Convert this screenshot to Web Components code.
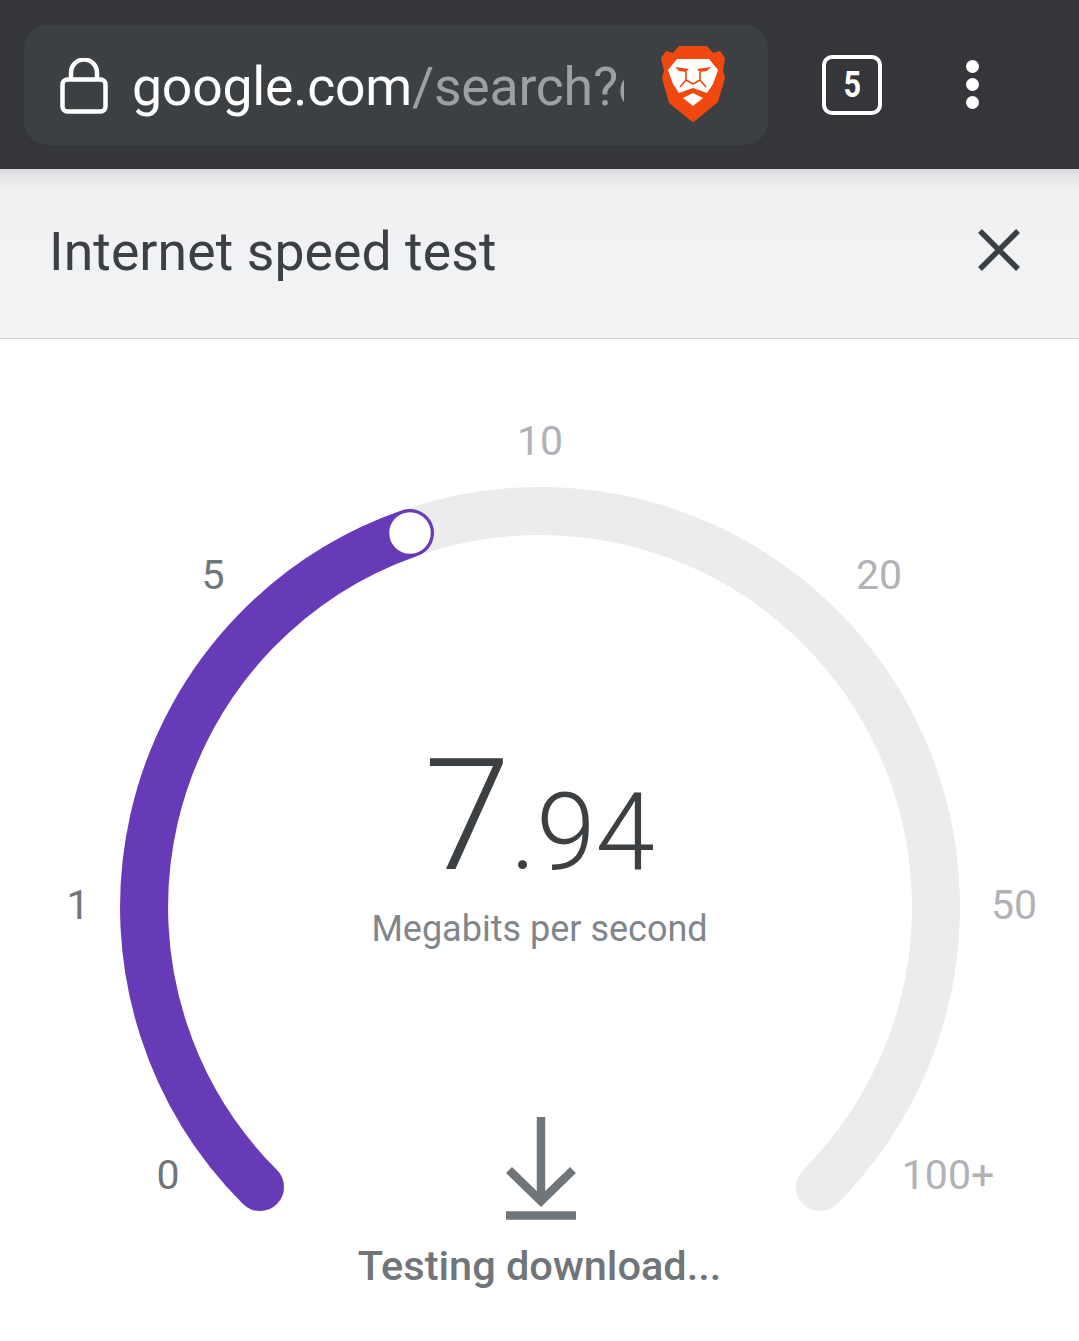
<!DOCTYPE html>
<html lang="en">
<head>
  <meta charset="UTF-8">
  <title>Internet speed test</title>
  <style>
    html, body { margin: 0; padding: 0; background: #fff; }
    body { font-family: Roboto, "Liberation Sans", sans-serif; width: 1079px; height: 1341px; overflow: hidden; }
  </style>
</head>
<body>
  <browser-toolbar tabs="5">
    <span slot="host">google.com</span><span slot="path">/search?q</span>
  </browser-toolbar>
  <panel-header>Internet speed test</panel-header>
  <speed-gauge whole="7" fraction=".94" unit="Megabits per second" status="Testing download..."></speed-gauge>

  <template id="toolbar-template">
    <style>
      :host { display: flex; align-items: center; height: 169px; background: #35363a; box-sizing: border-box; padding: 0 0 0 24px; }
      .omnibox { width: 744px; height: 120px; border-radius: 24px; background: #3c4043; display: flex; align-items: center; box-sizing: border-box; padding-left: 36px; }
      .lock { width: 48px; height: 56px; flex: none; margin-top: 2px; }
      .url { width: 492px; margin-left: 24px; margin-top: 4px; overflow: hidden; white-space: nowrap; font-size: 53.5px; line-height: 64px; color: #fff; letter-spacing: -0.2px; }
      .path { color: #9aa0a6; }
      .brave { width: 66px; height: 78px; flex: none; margin-left: 36px; margin-top: -2px; }
      .tabs { width: 60px; height: 60px; box-sizing: border-box; margin-left: 54px; border: 4px solid #fff; border-radius: 10px; color: #fff; display: flex; align-items: center; justify-content: center; font-size: 36px; font-weight: 700; flex: none; }
      .tabs span { display: block; transform: scaleX(.85); }
      .menu { width: 14px; height: 49px; margin-left: 84px; flex: none; display: flex; flex-direction: column; justify-content: space-between; }
      .menu i { display: block; width: 13px; height: 13px; border-radius: 50%; background: #fff; }
    </style>
    <div class="omnibox">
      <svg class="lock" viewBox="0 0 48 56" fill="none" stroke="#fff" stroke-width="4.5">
        <path d="M11 23V14.5a13 13 0 0 1 26 0V23"/>
        <rect x="2.5" y="21.5" width="43" height="32" rx="5"/>
      </svg>
      <div class="url"><slot name="host"></slot><span class="path"><slot name="path"></slot></span></div>
      <svg class="brave" viewBox="0 0 66 78">
        <path fill="#f1480f" d="M19 1H47L53 8L60 6L65 13L63 26L65 33L58 57L36 75L33 77L30 75L9 58L2 33L4 26L1 13L6 6L13 8Z"/>
        <path fill="#fff" d="M17 14H49L58 25L53 39L47 48L33 43L19 48L13 39L8 25Z"/>
        <path fill="#f1480f" d="M15 22L29 24L26 27L19 26Z M51 22L37 24L40 27L47 26Z"/>
        <path fill="none" stroke="#f1480f" stroke-width="1.6" d="M26 27V35L20 42M40 27V35L46 42M26 35L33 39L40 35"/>
        <path fill="#fff" d="M33 48L43 53L33 61L23 53Z"/>
      </svg>
    </div>
    <div class="tabs"><span id="count"></span></div>
    <div class="menu"><i></i><i></i><i></i></div>
  </template>

  <template id="header-template">
    <style>
      :host { display: flex; align-items: center; justify-content: space-between; box-sizing: border-box; height: 170px; padding: 0 59px 0 49px; color: #3c4043; font-size: 53.5px; background: linear-gradient(#dcdcde 0, #e8e8ea 9px, #e9e9eb 13px, #f1f1f3 21px, #f1f3f4 100%); border-bottom: 1px solid #cfd0d3; }
      svg { width: 42px; height: 42px; flex: none; margin-top: -7px; }
      .title { margin-top: -5px; letter-spacing: 0.1px; }
    </style>
    <div class="title"><slot></slot></div>
    <svg viewBox="0 0 42 42" stroke="#3c4043" stroke-width="5.5" fill="none"><path d="M2 2L40 40M40 2L2 40"/></svg>
  </template>

  <template id="gauge-template">
    <style>
      :host { display: block; position: relative; height: 1002px; background: #fff; }
      svg.dial { position: absolute; left: 0; top: 0; width: 1079px; height: 1002px; }
      .tick { position: absolute; transform: translate(-50%, -50%); font-size: 41px; line-height: 46px; color: #b0b2b8; }
      .tick.on { color: #70757a; }
      .readout { position: absolute; left: 0; width: 1079px; top: 402px; display: flex; flex-direction: column; align-items: center; }
      .value { font-weight: 300; color: #3c4043; line-height: 150px; height: 150px; white-space: nowrap; display: flex; align-items: baseline; }
      .whole { font-size: 156px; }
      .fraction { font-size: 107px; }
      .unit { font-size: 36px; line-height: 46px; color: #80868b; margin-top: 15px; }
      .status { position: absolute; left: 0; width: 1079px; top: 778px; display: flex; flex-direction: column; align-items: center; }
      .status svg { width: 70px; height: 104px; margin-left: 3px; }
      .status span { font-size: 41.5px; font-weight: 500; line-height: 50px; color: #70757a; margin-top: 20px; }
    </style>
    <svg class="dial" viewBox="0 0 1079 1002" fill="none">
      <circle cx="540" cy="568" r="396" stroke="#ececee" stroke-width="48" stroke-linecap="round" pathLength="360" stroke-dasharray="270 90" transform="rotate(135 540 568)"/>
      <path d="M260 848A396 396 0 0 1 410 194" stroke="#673ab7" stroke-width="48" stroke-linecap="round"/>
      <circle cx="410" cy="194" r="22" fill="#fff" stroke="#673ab7" stroke-width="2.5"/>
    </svg>
    <div class="ticks" id="ticks"></div>
    <div class="readout">
      <div class="value"><span class="whole" id="whole"></span><span class="fraction" id="fraction"></span></div>
      <div class="unit" id="unit"></div>
    </div>
    <div class="status">
      <svg viewBox="0 0 70 104" fill="none" stroke="#70757a" stroke-width="8.5">
        <path d="M35 0V84"/>
        <path d="M3 53L35 84L67 53"/>
        <path d="M0 98.5H70"/>
      </svg>
      <span id="status"></span>
    </div>
  </template>

  <script>
    class BrowserToolbar extends HTMLElement {
      constructor () {
        super()
        const root = this.attachShadow({mode: 'open'})
        root.appendChild(document.getElementById('toolbar-template').content.cloneNode(true))
        root.getElementById('count').textContent = this.getAttribute('tabs')
      }
    }
    class PanelHeader extends HTMLElement {
      constructor () {
        super()
        this.attachShadow({mode: 'open'}).appendChild(document.getElementById('header-template').content.cloneNode(true))
      }
    }
    // dial labels: [text, x, y, passed]
    const TICKS = [
      ['0', 168, 836, true], ['1', 78, 566, true], ['5', 213, 236, true],
      ['10', 540, 102, false], ['20', 879, 236, false], ['50', 1014, 566, false], ['100+', 948, 836, false]
    ]
    class SpeedGauge extends HTMLElement {
      constructor () {
        super()
        const root = this.attachShadow({mode: 'open'})
        root.appendChild(document.getElementById('gauge-template').content.cloneNode(true))
        for (const name of ['whole', 'fraction', 'unit', 'status']) {
          root.getElementById(name).textContent = this.getAttribute(name)
        }
        const ticks = root.getElementById('ticks')
        TICKS.forEach(([text, x, y, on]) => {
          const el = document.createElement('span')
          el.className = on ? 'tick on' : 'tick'
          el.textContent = text
          el.style.left = x + 'px'
          el.style.top = y + 'px'
          ticks.appendChild(el)
        })
      }
    }
    customElements.define('browser-toolbar', BrowserToolbar)
    customElements.define('panel-header', PanelHeader)
    customElements.define('speed-gauge', SpeedGauge)
  </script>
</body>
</html>
